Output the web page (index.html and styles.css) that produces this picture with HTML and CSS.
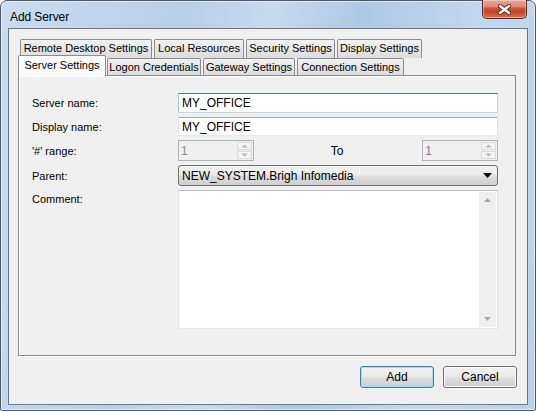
FILE: index.html
```html
<!DOCTYPE html>
<html>
<head>
<meta charset="utf-8">
<link rel="stylesheet" href="styles.css">
</head>
<body>
<div class="window">
  <div class="titlebar">
    <span class="title">Add Server</span>
    <div class="close">
      <svg width="13" height="11" viewBox="0 0 13 11">
        <path d="M2 2 L11 9 M11 2 L2 9" stroke="#5b2a22" stroke-width="4.2" stroke-linecap="round" fill="none"/>
        <path d="M2 2 L11 9 M11 2 L2 9" stroke="#ffffff" stroke-width="2.4" stroke-linecap="round" fill="none"/>
      </svg>
    </div>
  </div>
  <div class="client">
    <div class="tabs">
      <div class="tabrow back">
        <div class="tab t-rd">Remote Desktop Settings</div>
        <div class="tab t-lr">Local Resources</div>
        <div class="tab t-ss">Security Settings</div>
        <div class="tab t-ds">Display Settings</div>
      </div>
      <div class="tabrow front">
        <div class="tab selected t-sv">Server Settings</div>
        <div class="tab t-lc">Logon Credentials</div>
        <div class="tab t-gw">Gateway Settings</div>
        <div class="tab t-cs">Connection Settings</div>
      </div>
    </div>
    <div class="panel">
      <div class="form">
        <span class="lbl">Server name:</span>
        <div class="textbox focused">MY_OFFICE</div>
        <span class="lbl">Display name:</span>
        <div class="textbox">MY_OFFICE</div>
        <span class="lbl">'#' range:</span>
        <div class="rangerow">
          <div class="spin">
            <span class="spinval">1</span>
            <div class="spinbtns">
              <div class="sb"><svg width="7" height="4" viewBox="0 0 7 4"><path d="M0.5 3.5 L3.5 0.5 L6.5 3.5 Z" fill="#b4b4b4"/></svg></div>
              <div class="sb"><svg width="7" height="4" viewBox="0 0 7 4"><path d="M0.5 0.5 L3.5 3.5 L6.5 0.5 Z" fill="#b4b4b4"/></svg></div>
            </div>
          </div>
          <span class="to">To</span>
          <div class="spin">
            <span class="spinval purple">1</span>
            <div class="spinbtns">
              <div class="sb"><svg width="7" height="4" viewBox="0 0 7 4"><path d="M0.5 3.5 L3.5 0.5 L6.5 3.5 Z" fill="#b4b4b4"/></svg></div>
              <div class="sb"><svg width="7" height="4" viewBox="0 0 7 4"><path d="M0.5 0.5 L3.5 3.5 L6.5 0.5 Z" fill="#b4b4b4"/></svg></div>
            </div>
          </div>
        </div>
        <span class="lbl">Parent:</span>
        <div class="combo">
          <span class="comboval">NEW_SYSTEM.Brigh Infomedia</span>
          <svg width="9" height="5" viewBox="0 0 9 5"><path d="M0 0 L9 0 L4.5 5 Z" fill="#000"/></svg>
        </div>
        <span class="lbl top">Comment:</span>
        <div class="memo">
          <div class="memotext"></div>
          <div class="vscroll">
            <svg width="7" height="4" viewBox="0 0 7 4"><path d="M0 4 L3.5 0 L7 4 Z" fill="#a8a8a8"/></svg>
            <svg width="7" height="4" viewBox="0 0 7 4"><path d="M0 0 L3.5 4 L7 0 Z" fill="#a8a8a8"/></svg>
          </div>
        </div>
      </div>
    </div>
    <div class="buttons">
      <button class="btn default">Add</button>
      <button class="btn">Cancel</button>
    </div>
  </div>
</div>
</body>
</html>
```

FILE: styles.css
```css
* { box-sizing: border-box; }
html, body { margin: 0; padding: 0; }
body {
  width: 536px;
  height: 411px;
  overflow: hidden;
  font-family: "Liberation Sans", Arial, sans-serif;
  font-size: 11px;
  color: #000;
  background: #fff;
}
.window {
  width: 536px;
  height: 411px;
  border: 1px solid #4d5967;
  border-radius: 7px 7px 2px 2px;
  background: linear-gradient(100deg, #c9dcf0 0%, #b7cfe8 30%, #c6daef 45%, #aec9e5 60%, #c2d8ee 80%, #b9d1ea 100%);
  display: flex;
  flex-direction: column;
  box-shadow: inset 0 0 0 1px rgba(255,255,255,0.55);
}
.titlebar {
  height: 27px;
  display: flex;
  align-items: flex-start;
  flex: none;
}
.title {
  font-size: 12px;
  margin: 9px 0 0 9px;
  color: #000;
  letter-spacing: -0.1px;
}
.close {
  margin: -1px 8px 0 auto;
  width: 45px;
  height: 19px;
  border: 1px solid #5e2b20;
  border-top: none;
  border-radius: 0 0 5px 5px;
  background: linear-gradient(#e9a99a 0%, #dd8a74 35%, #c84a2e 50%, #c9462b 70%, #e07856 100%);
  box-shadow: inset 0 0 0 1px rgba(255,255,255,0.35);
  display: flex;
  align-items: center;
  justify-content: center;
}
.client {
  margin: 0 7px 0 7px;
  height: 377px;
  border: 1px solid #6a7788;
  background: #f0f0f0;
  padding: 10px 10px 0 9px;
  display: flex;
  flex-direction: column;
  flex: none;
}
.tabs { display: flex; flex-direction: column; }
.tabrow { display: flex; }
.tabrow.back { margin-left: 2px; height: 19px; gap: 2px; }
.tabrow.front { height: 17px; gap: 1px; align-items: flex-start; }
.tab {
  height: 100%;
  border: 1px solid #898c95;
  border-bottom: none;
  border-radius: 2px 2px 0 0;
  background: linear-gradient(#f2f2f2, #e6e6e6 50%, #dcdcdc);
  display: flex;
  align-items: center;
  justify-content: center;
  white-space: nowrap;
  padding-bottom: 1px;
}
.tabrow.back .tab { align-items: flex-start; padding-top: 2px; }
.tab.selected {
  position: relative;
  z-index: 2;
  height: 21px;
  margin-top: -3px;
  background: #fbfbfb;
  padding-bottom: 3px;
}
.t-rd { width: 132px; }
.t-lr { width: 90px; }
.t-ss { width: 89px; }
.t-ds { width: 85px; }
.t-sv { width: 88px; }
.t-lc { width: 94px; }
.t-gw { width: 92px; margin-left: 1px; }
.t-cs { width: 107px; margin-left: 1px; }
.panel {
  width: 498px;
  height: 281px;
  border: 1px solid #898c95;
  background: #f0f0f0;
  box-shadow: inset 1px 1px 0 #fcfcfc, 0 1px 0 #fff;
  padding: 17px 0 0 13px;
  flex: none;
}
.form {
  display: grid;
  grid-template-columns: 146px 320px;
  grid-template-rows: 20px 19px 21px 21px 139px;
  row-gap: 4px;
}
.lbl {
  display: flex;
  align-items: center;
  white-space: nowrap;
}
.lbl.top { align-items: flex-start; padding-top: 3px; }
.textbox {
  border: 1px solid #abadb3;
  border-color: #abadb3 #dbdfe6 #e3e9ef #e2e3ea;
  background: #fff;
  padding: 0 3px;
  display: flex;
  align-items: center;
  font-size: 12px;
}
.textbox.focused {
  border-color: #3d7bad #b5cfe7 #b7d9ed #a4c9e3;
}
.rangerow { display: flex; align-items: stretch; }
.spin {
  width: 76px;
  border: 1px solid #adb2b5;
  background: #f0f0f0;
  display: flex;
  align-items: stretch;
}
.spinval {
  flex: 1;
  display: flex;
  align-items: center;
  padding-left: 2px;
  color: #8d8d8d;
  font-size: 12px;
}
.spinval.purple { color: #8f6fa6; }
.spinbtns {
  width: 15px;
  margin: 1px;
  display: flex;
  flex-direction: column;
  gap: 1px;
}
.sb {
  flex: 1;
  border: 1px solid #d9d9d9;
  background: #f4f4f4;
  display: flex;
  align-items: center;
  justify-content: center;
}
.to {
  margin-left: 77px;
  width: 92px;
  display: flex;
  align-items: center;
  font-size: 12px;
}
.combo {
  border: 1px solid #707070;
  border-radius: 3px;
  background: linear-gradient(#f2f2f2 0%, #ebebeb 45%, #dddddd 55%, #cfcfcf 100%);
  display: flex;
  align-items: center;
  padding: 0 5px 0 3px;
  font-size: 12px;
}
.comboval { flex: 1; }
.memo {
  border: 1px solid #c9cacf;
  border-color: #bfc1c6 #dfe1e6 #e3e9ef #dfe1e6;
  background: #fff;
  display: flex;
}
.memotext { flex: 1; }
.vscroll {
  width: 17px;
  margin: 1px;
  background: #efefef;
  display: flex;
  flex-direction: column;
  justify-content: space-between;
  align-items: center;
  padding: 6px 0 6px;
}
.buttons {
  display: flex;
  justify-content: flex-end;
  gap: 9px;
  margin-top: 10px;
}
.btn {
  width: 74px;
  height: 22px;
  font-family: "Liberation Sans", Arial, sans-serif;
  font-size: 12px;
  color: #000;
  border: 1px solid #707070;
  border-radius: 3px;
  background: linear-gradient(#f2f2f2 0%, #ebebeb 45%, #dddddd 55%, #cfcfcf 100%);
  box-shadow: inset 0 0 0 1px #fcfcfc;
  padding: 0;
  margin: 0;
}
.btn.default {
  border-color: #3c7fb1;
  box-shadow: inset 0 0 0 1px #9fdcf9;
}
```
